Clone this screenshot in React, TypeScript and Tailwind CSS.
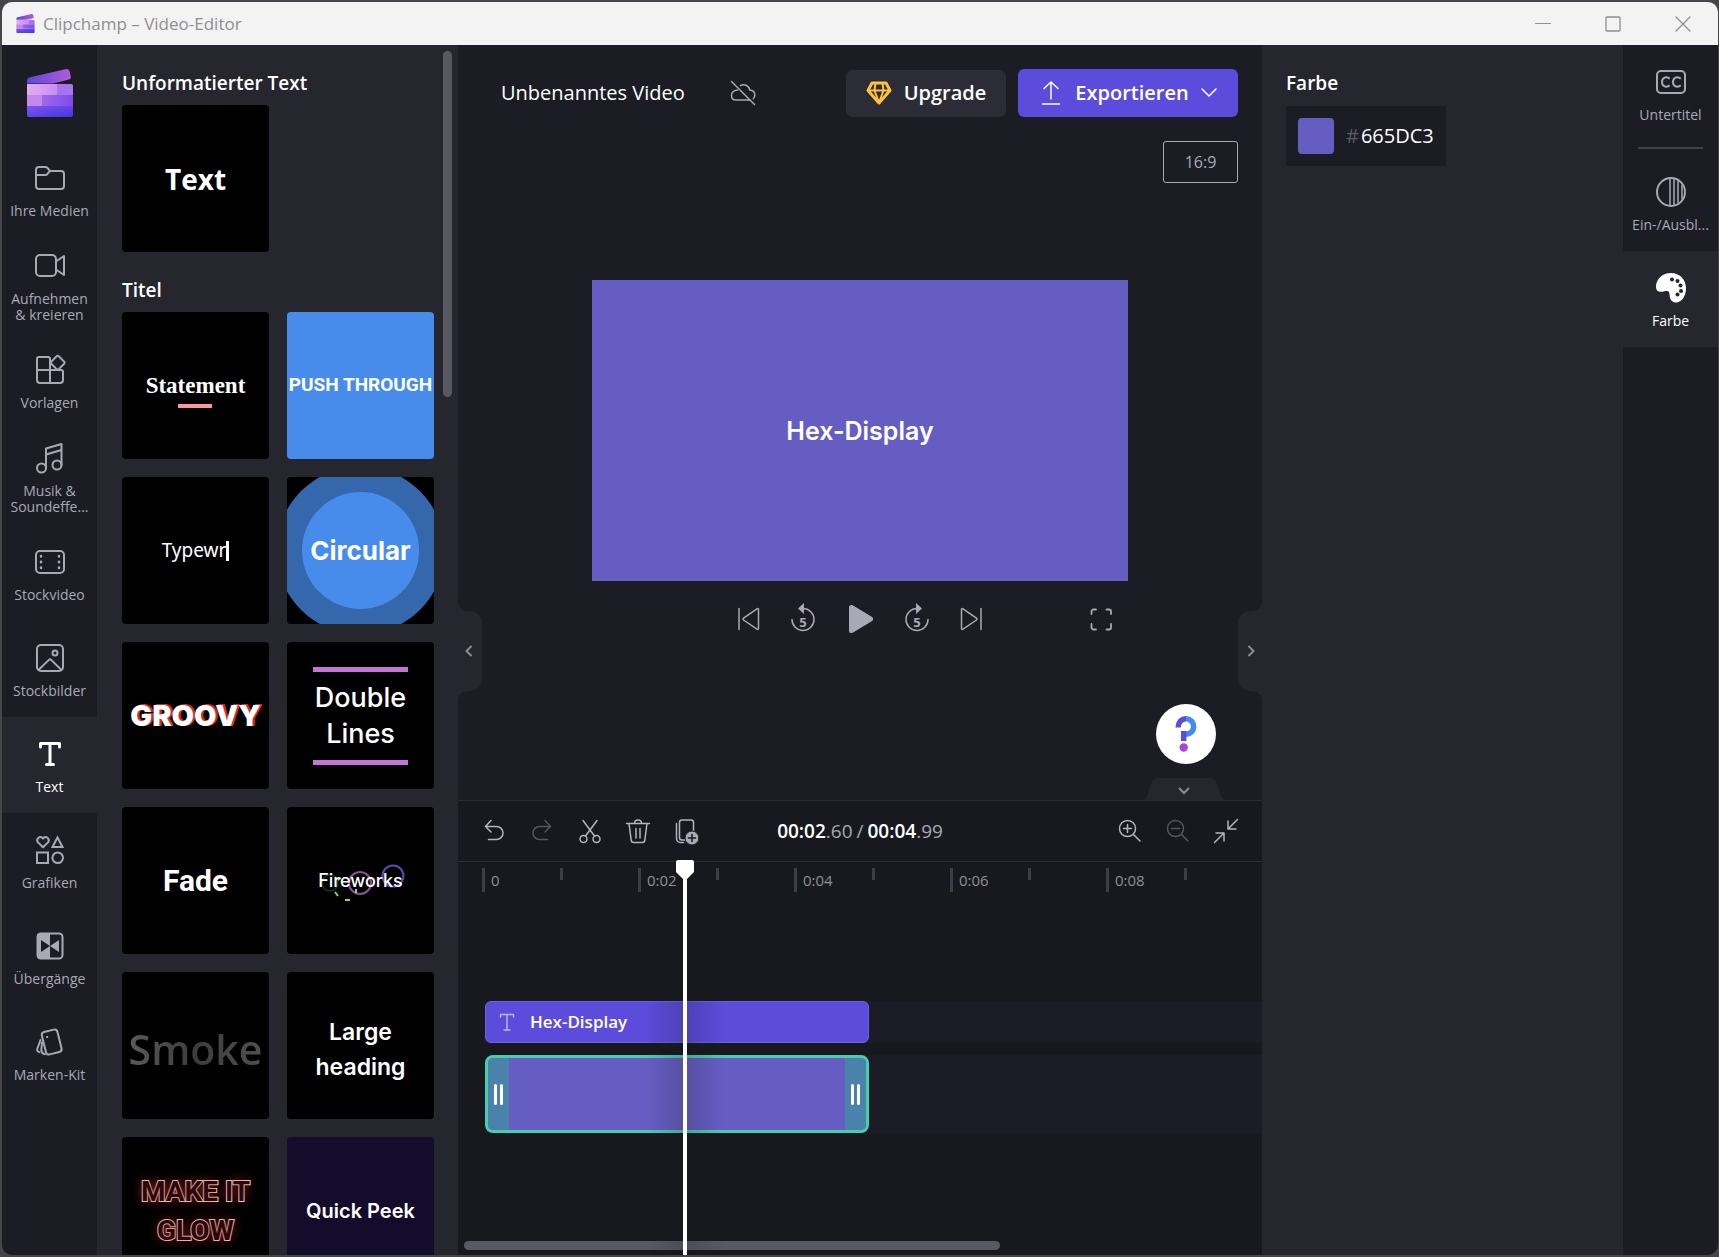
import type { ReactNode } from "react";

/* ---------- shared svg wrapper ---------- */

function Icon({ size = 32, width = 2, children }: { size?: number; width?: number; children: ReactNode }) {
  return (
    <svg
      width={size}
      height={size}
      viewBox={`0 0 ${size} ${size}`}
      fill="none"
      stroke="currentColor"
      strokeWidth={width}
      strokeLinecap="round"
      strokeLinejoin="round"
      className="shrink-0"
      aria-hidden="true"
    >
      {children}
    </svg>
  );
}

function Logo({ size, id }: { size: number; id: string }) {
  return (
    <svg width={size} height={size} viewBox="0 0 48 48" aria-hidden="true">
      <defs>
        <linearGradient id={`${id}a`} x1="0" x2="1">
          <stop offset="0" stopColor="#5a48d8" />
          <stop offset="1" stopColor="#b35bd8" />
        </linearGradient>
        <linearGradient id={`${id}b`} x1="0" x2="1">
          <stop offset="0" stopColor="#e4aaf6" />
          <stop offset="1" stopColor="#c890ee" />
        </linearGradient>
        <linearGradient id={`${id}c`} x1="0" x2="1" y2="1">
          <stop offset="0" stopColor="#7a58ea" />
          <stop offset="1" stopColor="#4a32e4" />
        </linearGradient>
        <linearGradient id={`${id}d`} x1="0" x2="1">
          <stop offset="0" stopColor="#a068ea" />
          <stop offset="1" stopColor="#7c4cea" />
        </linearGradient>
      </defs>
      <path d="M1 12c0-2 1-3.300 3-3.800L39.500.2c2-.4 3.500.4 4 2.300l1.300 5c.4 1.700-.3 2.700-2 3.100L27 14.500H1z" fill={`url(#${id}a)`} />
      <path d="M1 15h30v11H1z" fill={`url(#${id}b)`} />
      <path d="M31 15h14a2 2 0 0 1 2 2v9H31z" fill="#a873ec" />
      <path d="M1 26h15v11H1z" fill="#c586ee" />
      <path d="M16 26h31v11H16z" fill={`url(#${id}d)`} />
      <path d="M1 37h46v9a2 2 0 0 1-2 2H3a2 2 0 0 1-2-2z" fill={`url(#${id}c)`} />
    </svg>
  );
}

/* ---------- side navigation ---------- */

const icons: Record<string, ReactNode> = {
  media: (
    <Icon>
      <path d="M2 8a3 3 0 0 1 3-3h6.500c.8 0 1.400.3 1.900.8L16 9h11a3 3 0 0 1 3 3v12a3 3 0 0 1-3 3H5a3 3 0 0 1-3-3z" />
      <path d="M2 13h9.300c.8 0 1.400-.3 1.900-.8L16 9" />
    </Icon>
  ),
  record: (
    <Icon>
      <rect x="2" y="5" width="20" height="21" rx="4" />
      <path d="M22 11.500 30 6v19l-8-5.500" />
    </Icon>
  ),
  templates: (
    <Icon>
      <path d="M16 16V5a2 2 0 0 0-2-2H5a2 2 0 0 0-2 2v21a3 3 0 0 0 3 3h20a3 3 0 0 0 3-3v-8a2 2 0 0 0-2-2zM3 16h13v13" />
      <path d="M22.600 2.300a1.500 1.500 0 0 1 2.200 0l5.300 5.300a1.500 1.500 0 0 1 0 2.200l-5.300 5.300a1.500 1.500 0 0 1-2.200 0l-5.300-5.300a1.500 1.500 0 0 1 0-2.200z" />
    </Icon>
  ),
  music: (
    <Icon>
      <circle cx="7.500" cy="26" r="4.500" />
      <circle cx="23" cy="23" r="4.500" />
      <path d="M12 26V6.500L27.500 2v21M12 12.500 27.500 8" />
    </Icon>
  ),
  video: (
    <Icon>
      <rect x="2" y="5" width="28" height="22" rx="4" />
      <path d="M7 10v.6M7 15.700v.6M7 21.500v.6M25 10v.6M25 15.700v.6M25 21.500v.6" strokeWidth="2.500" />
    </Icon>
  ),
  image: (
    <Icon>
      <rect x="3" y="3" width="26" height="26" rx="4" />
      <circle cx="21" cy="11" r="2.500" />
      <path d="m5 27.500 9.600-9.400a2 2 0 0 1 2.800 0L27 27.500" />
    </Icon>
  ),
  text: (
    <Icon width={3}>
      <path d="M6.500 9V5.500h19V9M16 5.500v21M12.500 26.500h7" />
    </Icon>
  ),
  graphics: (
    <Icon>
      <path d="M9 13.300 4 8.400a3.200 3.200 0 0 1 4.500-4.500l.5.600.5-.6A3.200 3.200 0 0 1 14 8.400z" />
      <path d="m23.500 3.500 5 9.500h-10zM3 18.500h11v10.500H3z" strokeLinejoin="miter" />
      <circle cx="23.700" cy="23.700" r="5.300" />
    </Icon>
  ),
  transitions: (
    <Icon>
      <rect x="3.500" y="3.500" width="25" height="25" rx="3.500" />
      <path d="M16 3H6a3 3 0 0 0-3 3v20a3 3 0 0 0 3 3h10V16l-9 6V10l9 6zM25 10v12l-9-6z" fill="currentColor" fillRule="evenodd" stroke="none" />
    </Icon>
  ),
  brand: (
    <Icon>
      <rect x="9.700" y="4.500" width="16" height="23" rx="3" transform="rotate(-14 17.700 16)" />
      <circle cx="13.200" cy="11" r="1" fill="currentColor" stroke="none" />
      <path d="M13.200 10.900v.2" />
      <path d="M6.500 14 3.400 22.500c-.7 1.800.1 3 1.800 3.600M8 16.500l-.7 7.500c0 2 1.200 3.700 3.500 4.200" />
    </Icon>
  ),
  captions: (
    <Icon>
      <rect x="2" y="5" width="28" height="22" rx="4" />
      <path d="M14 12.200c-3.500-2-7-.3-7 3.800s3.500 5.800 7 3.800M25 12.200c-3.500-2-7-.3-7 3.800s3.500 5.800 7 3.800" />
    </Icon>
  ),
  fade: (
    <Icon>
      <circle cx="16" cy="16" r="14" />
      <path d="M15 3v26M19 3.500v25M23 5.500v21M27 9v14" strokeWidth="1.500" />
    </Icon>
  ),
  palette: (
    <svg width="32" height="32" viewBox="0 0 32 32" aria-hidden="true">
      <path
        d="M16 1c8.500 0 15 6.500 15 15 0 8-4 14.500-10 14.500-3.500 0-6-2.500-6.300-6.500-.2-3.300-.7-5-2.700-5-2.500 0-4 .8-6.500.8C2.500 19.800 1 18 1 15 1 7 7.500 1 16 1z"
        fill="currentColor"
      />
      <g fill="#26262f">
        <circle cx="17" cy="7.500" r="2" />
        <circle cx="22.500" cy="9" r="2" />
        <circle cx="25.500" cy="13.500" r="2" />
        <circle cx="26" cy="19" r="2" />
        <circle cx="22.500" cy="22.500" r="2" />
      </g>
    </svg>
  ),
};

function NavItem({ icon, lines, active = false }: { icon: string; lines: string[]; active?: boolean }) {
  return (
    <button
      type="button"
      aria-current={active ? "page" : undefined}
      className={`flex h-24 w-full shrink-0 flex-col items-center justify-center gap-[9px] whitespace-nowrap pt-[3px] text-sm leading-4 ${
        active ? "bg-[#26262f] font-medium text-white" : "text-[#a9a9b5]"
      }`}
    >
      {icons[icon]}
      <span className="flex flex-col">
        {lines.map((line) => (
          <span key={line}>{line}</span>
        ))}
      </span>
    </button>
  );
}

/* ---------- template tiles ---------- */

function Tile({ label, className = "bg-black", children }: { label: string; className?: string; children: ReactNode }) {
  return (
    <button
      type="button"
      aria-label={label}
      className={`relative flex size-[147px] shrink-0 items-center justify-center overflow-hidden rounded-sm text-white ${className}`}
    >
      {children}
    </button>
  );
}

function TemplatePanel() {
  return (
    <section className="flex w-[361px] shrink-0 justify-between overflow-hidden bg-[#26262f] pl-[25px] pr-1.5 pt-1.5">
      <div className="flex flex-col pt-[18px]">
        <h2 className="h-9 shrink-0 text-[19px] font-semibold leading-7 text-white">Unformatierter Text</h2>
        <Tile label="Text">
          <span className="text-[28px] font-bold">Text</span>
        </Tile>
        <h2 className="mt-6 h-9 shrink-0 text-[19px] font-semibold leading-7 text-white">Titel</h2>
        <div className="grid grid-cols-2 gap-[18px]">
          <Tile label="Statement">
            <span className="flex flex-col items-center gap-1 pt-2 font-['Liberation_Serif',serif] text-[23px] font-bold">
              <span className="leading-7">Statement</span>
              <span className="h-1 w-[34px] bg-[#f99a98]" />
            </span>
          </Tile>
          <Tile label="Push Through" className="bg-[#488ceb]">
            <span className="whitespace-nowrap font-['Roboto',sans-serif] text-[19px] font-bold">PUSH THROUGH</span>
          </Tile>
          <Tile label="Typewriter">
            <span className="flex items-center">
              <span className="font-['Noto_Sans',sans-serif] text-[19px]">Typewr</span>
              <span className="h-5 w-[3px] bg-white" />
            </span>
          </Tile>
          <Tile label="Circular">
            <svg viewBox="0 0 147 147" className="absolute inset-0" aria-hidden="true">
              <circle cx="73.500" cy="73.500" r="84" fill="#3567ad" />
              <circle cx="73.500" cy="73.500" r="58.500" fill="#488ceb" />
            </svg>
            <span className="relative font-['Inter',sans-serif] text-[26px] font-bold">Circular</span>
          </Tile>
          <Tile label="Groovy">
            <span className="font-['Inter',sans-serif] text-[29px] font-black [text-shadow:2px_0_0_#d42a2a,2px_-1px_0_#d42a2a]">GROOVY</span>
          </Tile>
          <Tile label="Double Lines">
            <span className="flex w-[95px] flex-col items-center gap-2">
              <span className="h-[5px] w-full bg-[#c573d6]" />
              <span className="text-center font-['Inter',sans-serif] text-[27px] font-medium leading-9">
                Double
                <br />
                Lines
              </span>
              <span className="h-[5px] w-full bg-[#c573d6]" />
            </span>
          </Tile>
          <Tile label="Fade">
            <span className="font-['Roboto',sans-serif] text-[30px] font-bold">Fade</span>
          </Tile>
          <Tile label="Fireworks">
            <svg viewBox="0 0 147 147" className="absolute inset-0" fill="none" aria-hidden="true">
              <circle cx="73" cy="76" r="11" stroke="#8d5095" strokeWidth="2" />
              <circle cx="106" cy="69" r="10.500" stroke="#5a4bb4" strokeWidth="2" />
              <circle cx="43" cy="76" r="8" stroke="#123524" strokeWidth="1.500" />
              <path d="m48 85 3 4M58 93h5M69 82v4M51 73l3-2" stroke="#6fe08a" strokeWidth="2" />
            </svg>
            <span className="relative font-['Inter',sans-serif] text-lg font-medium">Fireworks</span>
          </Tile>
          <Tile label="Smoke">
            <span className="bg-linear-to-r from-[#5a5a5a] via-[#3c3c3c] to-[#505050] bg-clip-text pt-2 font-['Open_Sans',sans-serif] text-[41px] font-semibold text-transparent">
              Smoke
            </span>
          </Tile>
          <Tile label="Large heading">
            <span className="pt-2 text-center font-['Inter',sans-serif] text-[23px] font-semibold leading-[35px]">
              Large
              <br />
              heading
            </span>
          </Tile>
          <Tile label="Make it glow">
            <span className="text-center font-['Roboto',sans-serif] text-[28px] font-bold leading-[39px] text-[#2a080a] [-webkit-text-stroke:2px_#f6e4dc] [paint-order:stroke_fill] [text-shadow:0_0_12px_#a02222]">
              MAKE IT
              <br />
              GLOW
            </span>
          </Tile>
          <Tile label="Quick Peek" className="bg-[#130d2b]">
            <span className="font-['Inter',sans-serif] text-xl font-semibold">Quick Peek</span>
          </Tile>
        </div>
      </div>
      <div className="h-[346px] w-[9px] rounded-full bg-[#595964]" />
    </section>
  );
}

/* ---------- stage ---------- */

function StageHeader() {
  return (
    <div className="flex flex-col items-end gap-6 pl-[43px] pr-6 pt-6">
      <div className="flex w-full items-center">
        <h1 className="text-xl leading-7 text-white">Unbenanntes Video</h1>
        <button type="button" aria-label="Nicht in der Cloud gesichert" className="ml-11 text-[#a9a9b5]">
          <Icon size={28} width={1.5}>
            <path d="M8.500 11C4.500 11.500 2.500 14 2.500 16.500c0 3 2 4.500 4.500 4.500h14.500M11.500 6.500c4.500-2 8.500.5 9.300 4.500 3.200.2 5 2.500 5 5.300 0 1.200-.5 2.500-1.500 3.400M2.500 2.500l23 23" />
          </Icon>
        </button>
        <div className="ml-auto flex items-center gap-3">
          <button type="button" className="flex h-[47px] w-40 items-center justify-center gap-3 rounded-md bg-[#2c2c37] text-xl font-semibold text-white">
            <svg width="26" height="24" viewBox="0 0 26 24" fill="none" stroke="#ffc23d" strokeWidth="3" strokeLinejoin="round" aria-hidden="true">
              <path d="M6 2h14l4 7.500L13 22 2 9.500z" />
              <path d="M1.500 9.500h23M9.500 2 8.500 9.500l4.500 12 4.500-12L16.500 2" strokeWidth="2" />
            </svg>
            Upgrade
          </button>
          <button type="button" className="flex h-12 w-[220px] items-center justify-center gap-3 rounded-md bg-[#5b4cdb] text-xl font-semibold text-white">
            <Icon size={24} width={1.5}>
              <path d="M12 18V1M5 7.500 12 1l7 6.500M3.500 23h17" />
            </Icon>
            Exportieren
            <Icon size={16} width={1.500}>
              <path d="m1 4 7 7 7-7" />
            </Icon>
          </button>
        </div>
      </div>
      <button type="button" className="h-[42px] w-[75px] rounded-[3px] border border-[#a9a9b5] text-base text-[#a9a9b5]">
        16:9
      </button>
    </div>
  );
}

function PlayerControls() {
  return (
    <div className="mx-auto flex w-2/3 items-center pl-[142px] pr-3 text-[#a9a9b5]">
      <div className="flex items-center gap-6">
        <button type="button" aria-label="Zum Anfang">
          <Icon size={30} width={1.5}>
            <path d="M5 4.500v21M24.500 5.500v19c0 .8-.8 1.200-1.500.7L9.500 16c-.7-.5-.7-1.300 0-1.800L23 4.800c.7-.5 1.500-.1 1.500.7z" />
          </Icon>
        </button>
        <button type="button" aria-label="5 Sekunden zurück">
          <SeekIcon back />
        </button>
        <button type="button" aria-label="Wiedergabe" className="pl-1">
          <svg width="32" height="32" viewBox="0 0 32 32" fill="currentColor" aria-hidden="true">
            <path d="M3 4.500C3 2.300 4.800 1.300 6.700 2.300l19 11.500c2 1.200 2 3.200 0 4.400l-19 11.500c-1.900 1-3.700 0-3.700-2.200z" />
          </svg>
        </button>
        <button type="button" aria-label="5 Sekunden vor">
          <SeekIcon />
        </button>
        <button type="button" aria-label="Zum Ende">
          <Icon size={30} width={1.5}>
            <path d="M25 4.500v21M5.500 5.500v19c0 .8.8 1.200 1.500.7L20.500 16c.7-.5.7-1.300 0-1.800L7 4.800c-.7-.5-1.500-.1-1.500.7z" />
          </Icon>
        </button>
      </div>
      <button type="button" aria-label="Vollbild" className="ml-auto">
        <Icon size={30} width={1.800}>
          <path d="M5.500 10V7.500a2 2 0 0 1 2-2H10M20.500 5.500H23a2 2 0 0 1 2 2V10M25 20v3.500a2 2 0 0 1-2 2h-2.500M10 25.500H7.500a2 2 0 0 1-2-2V20" />
        </Icon>
      </button>
    </div>
  );
}

function SeekIcon({ back = false }: { back?: boolean }) {
  return (
    <span className="relative flex size-[30px] items-end justify-center">
      <svg width="30" height="34" viewBox="0 0 30 34" fill="none" stroke="currentColor" strokeWidth="1.500" className={`absolute -top-0.5 left-0 ${back ? "" : "-scale-x-100"}`} aria-hidden="true">
        <path d="M4 17.500a11 11 0 1 0 11-11" strokeLinecap="round" />
        <path d="m10 6.500 6-5.500v11z" fill="currentColor" stroke="none" />
      </svg>
      <span className="text-[13px] font-bold leading-6">5</span>
    </span>
  );
}

function SideHandle({ side }: { side: "left" | "right" }) {
  const left = side === "left";
  return (
    <button
      type="button"
      aria-label={left ? "Linkes Panel einklappen" : "Rechtes Panel einklappen"}
      className={`absolute top-[555px] h-[102px] w-6 text-[#8b8b98] ${left ? "left-0" : "right-0"}`}
    >
      <svg width="24" height="102" viewBox="0 0 24 102" fill="none" aria-hidden="true">
        <g transform={left ? undefined : "matrix(-1 0 0 1 24 0)"}>
          <path d="M0 0c0 8 5 11 11 11 8 0 13 5 13 12v56c0 7-5 12-13 12-6 0-11 3-11 11z" fill="#26262f" />
          <path d="m13.500 46-5 5 5 5" stroke="currentColor" strokeWidth="2" />
        </g>
      </svg>
    </button>
  );
}

function Stage() {
  return (
    <section className="relative flex min-h-0 flex-1 flex-col bg-[#1c1c25]">
      <StageHeader />
      <div className="mx-auto mt-[97px] flex aspect-video w-2/3 items-center justify-center bg-[#665dc3]">
        <span className="font-['Inter',sans-serif] text-[25px] font-semibold leading-8 text-white">Hex-Display</span>
      </div>
      <div className="mt-[22px]">
        <PlayerControls />
      </div>
      <SideHandle side="left" />
      <SideHandle side="right" />
      <button type="button" aria-label="Hilfe" className="absolute bottom-9 right-[46px] size-[60px] rounded-full bg-white">
        <svg width="60" height="60" viewBox="0 0 60 60" fill="none" strokeWidth="5.500" aria-hidden="true">
          <path d="M22.300 23.500v-1a7.700 7.700 0 0 1 7.700-7.700" stroke="#5b4cdb" />
          <path d="M30 14.800a7.700 7.700 0 0 1 0 15.400" stroke="#458ceb" />
          <path d="M27.700 27v10" stroke="#5b4cdb" />
          <circle cx="27.700" cy="43.500" r="4.200" fill="#ae43dc" />
        </svg>
      </button>
      <button type="button" aria-label="Zeitachse einklappen" className="absolute bottom-0 right-[34px] text-[#8b8b98]">
        <svg width="88" height="22" viewBox="0 0 88 22" fill="none" aria-hidden="true">
          <path d="M0 22c6 0 8-4 9-10C10 4 14 0 20 0h48c6 0 10 4 11 12 1 6 3 10 9 10z" fill="#26262f" />
          <path d="m39 10 5 5 5-5" stroke="currentColor" strokeWidth="2" />
        </svg>
      </button>
    </section>
  );
}

/* ---------- timeline ---------- */

function Tool({ label, disabled = false, children }: { label: string; disabled?: boolean; children: ReactNode }) {
  return (
    <button type="button" aria-label={label} disabled={disabled} className={`size-7 ${disabled ? "text-[#55555c]" : "text-[#b4b4be]"}`}>
      <Icon size={28} width={1.500}>
        {children}
      </Icon>
    </button>
  );
}

function Toolbar() {
  return (
    <div className="flex h-[61px] items-center justify-between border-b border-[#2b2b34] px-[22px]">
      <div className="flex flex-1 gap-5">
        <Tool label="Rückgängig">
          <path d="M11 3.500 5.500 9.500 11 15M5.500 9.500h11a6.500 6.500 0 0 1 0 13H8.500" />
        </Tool>
        <Tool label="Wiederholen" disabled>
          <path d="M17 3.500l5.500 6L17 15M22.500 9.500h-11a6.500 6.500 0 0 0 0 13h8" />
        </Tool>
        <Tool label="Teilen">
          <circle cx="7.500" cy="22" r="3.500" />
          <circle cx="20.500" cy="22" r="3.500" />
          <path d="M7 3.500 18.500 19M21 3.500 9.500 19" />
        </Tool>
        <Tool label="Löschen">
          <path d="M2.500 6.500h23M5 6.500l2.200 17a2.500 2.500 0 0 0 2.500 2h8.600a2.500 2.500 0 0 0 2.500-2l2.200-17M10.500 6.500c0-2.300 1.500-3.500 3.500-3.500s3.500 1.200 3.500 3.500M12 11.500v9.500M16 11.500v9.500" />
        </Tool>
        <Tool label="Duplizieren">
          <rect x="7.500" y="3" width="14" height="20" rx="2.500" />
          <path d="M4.500 6.500v15a4 4 0 0 0 4 4h3" />
          <circle cx="20" cy="21" r="7" fill="#a9a9b5" stroke="#18191e" strokeWidth="1" />
          <path d="M20 17.500v7M16.500 21h7" stroke="#18191e" />
        </Tool>
      </div>
      <div className="flex items-center gap-1 text-[19px] leading-6 text-[#a9a9b5]">
        <span>
          <span className="font-semibold text-white">00:02</span>.60
        </span>
        <span>/</span>
        <span>
          <span className="font-semibold text-white">00:04</span>.99
        </span>
      </div>
      <div className="flex flex-1 justify-end gap-5">
        <Tool label="Vergrößern">
          <circle cx="11.500" cy="11.500" r="8" />
          <path d="m17.500 17.500 6.500 6.500M7.500 11.500h8M11.500 7.500v8" />
        </Tool>
        <Tool label="Verkleinern" disabled>
          <circle cx="11.500" cy="11.500" r="8" />
          <path d="m17.500 17.500 6.500 6.500M7.500 11.500h8" />
        </Tool>
        <Tool label="An Ansicht anpassen">
          <path d="M25.500 2.500 16 12M16 4v8h8M2.500 25.500 12 16M4 16h8v8" />
        </Tool>
      </div>
    </div>
  );
}

function TrimHandle() {
  return (
    <span className="flex w-[21px] items-center justify-center gap-[3px] bg-[#4a82ab]">
      <span className="h-[21px] w-[3px] rounded-full bg-white" />
      <span className="h-[21px] w-[3px] rounded-full bg-white" />
    </span>
  );
}

const marks = ["0", "0:02", "0:04", "0:06", "0:08"];

function Timeline() {
  return (
    <section className="flex h-[455px] shrink-0 flex-col border-t border-[#2b2b34] bg-[#18191e]">
      <Toolbar />
      <div className="relative flex min-h-0 flex-1 flex-col overflow-x-clip">
        <div className="flex h-[139px] shrink-0 pl-6 pt-1.5">
          {marks.map((mark) => (
            <div key={mark} className="flex h-6 w-[156px] shrink-0">
              <div className="w-[78px] border-l-[3px] border-[#3d3d47] pl-1.5 text-[15px] font-medium leading-6 text-[#8f8f9a]">{mark}</div>
              <div className="h-3 border-l-[3px] border-[#3d3d47]" />
            </div>
          ))}
        </div>
        <div className="ml-[27px] flex flex-col gap-3">
          <div className="flex h-[42px] bg-[#1c1c26]">
            <button type="button" className="flex w-96 items-center gap-3.5 rounded-md border border-[#6e61e2] bg-[#5b4cdb] pl-3 text-[17px] font-semibold text-white">
              <span className="text-[#b9b2f3]">
                <Icon size={18} width={1.500}>
                  <path d="M2.500 4V1.500h13V4M9 1.500v15.500M6 17h6" />
                </Icon>
              </span>
              Hex-Display
            </button>
          </div>
          <div className="flex h-[78px] bg-[#1c1c26]">
            <button type="button" aria-label="Farbclip" className="flex w-96 justify-between overflow-hidden rounded-lg border-[3px] border-[#45cfae] bg-[#665dc3]">
              <span className="flex h-full w-full justify-between">
                <TrimHandle />
                <TrimHandle />
              </span>
            </button>
          </div>
        </div>
        <div className="mb-[5px] ml-1.5 mt-auto h-[9px] w-2/3 rounded-full bg-[#595964]" />
        <div className="absolute -top-0.5 bottom-0 left-[188px] flex w-[78px] flex-col items-center">
          <div className="absolute inset-x-0 bottom-0 top-[141px] bg-linear-to-r from-transparent via-[#18191e]/20 to-transparent" />
          <svg width="18" height="22" viewBox="0 0 18 22" className="relative shrink-0" aria-hidden="true">
            <path d="M2 0h14a2 2 0 0 1 2 2v10l-7 7v3H7v-3l-7-7V2a2 2 0 0 1 2-2z" fill="#fff" />
          </svg>
          <div className="relative w-1 flex-1 bg-white" />
        </div>
      </div>
    </section>
  );
}

/* ---------- application ---------- */

export default function App() {
  return (
    <div className="h-screen overflow-hidden border-y-2 border-l-2 border-r border-[#44464a] bg-[#44464a] font-['Open_Sans','Noto_Sans',sans-serif]">
      <div className="flex h-full flex-col overflow-hidden rounded-[10px]">
        <header className="flex h-[43px] shrink-0 items-center bg-[#f3f3f3] pl-3.5 text-[#8f8f8f]">
          <Logo size={19} id="bar" />
          <span className="ml-2 text-[17px] leading-6">Clipchamp – Video-Editor</span>
          <div className="ml-auto flex">
            <button type="button" aria-label="Minimieren" className="flex h-10 w-[70px] items-center justify-center">
              <Icon size={16} width={1}>
                <path d="M.5 7.500h15" />
              </Icon>
            </button>
            <button type="button" aria-label="Maximieren" className="flex h-10 w-[70px] items-center justify-center">
              <Icon size={16} width={1.300}>
                <rect x="1" y="1" width="14" height="14" rx="1" />
              </Icon>
            </button>
            <button type="button" aria-label="Schließen" className="flex h-10 w-[70px] items-center justify-center">
              <Icon size={16} width={1.300}>
                <path d="m1 1 14 14M15 1 1 15" />
              </Icon>
            </button>
          </div>
        </header>
        <main className="flex min-h-0 flex-1">
          <nav aria-label="Inhalte" className="flex w-[95px] shrink-0 flex-col bg-[#1c1c25]">
            <div className="flex h-24 shrink-0 items-center justify-center">
              <Logo size={48} id="nav" />
            </div>
            <NavItem icon="media" lines={["Ihre Medien"]} />
            <NavItem icon="record" lines={["Aufnehmen", "& kreieren"]} />
            <NavItem icon="templates" lines={["Vorlagen"]} />
            <NavItem icon="music" lines={["Musik &", "Soundeffe..."]} />
            <NavItem icon="video" lines={["Stockvideo"]} />
            <NavItem icon="image" lines={["Stockbilder"]} />
            <NavItem icon="text" lines={["Text"]} active />
            <NavItem icon="graphics" lines={["Grafiken"]} />
            <NavItem icon="transitions" lines={["Übergänge"]} />
            <NavItem icon="brand" lines={["Marken-Kit"]} />
          </nav>
          <TemplatePanel />
          <div className="flex min-w-0 flex-1 flex-col">
            <Stage />
            <Timeline />
          </div>
          <aside className="w-[361px] shrink-0 bg-[#26262f] pl-6 pt-6 text-white">
            <h2 className="h-[37px] text-[19px] font-semibold leading-7">Farbe</h2>
            <label className="flex h-[60px] w-40 items-center rounded-[3px] bg-[#1c1c25] pl-3 text-xl">
              <span className="size-9 shrink-0 rounded-sm bg-[#665dc3]" />
              <span className="ml-3 text-[#5a5a64]">#</span>
              <input type="text" aria-label="Hex-Farbwert" defaultValue="665DC3" className="ml-0.5 w-20 min-w-0 bg-transparent outline-none" />
            </label>
          </aside>
          <nav aria-label="Eigenschaften" className="flex w-[95px] shrink-0 flex-col bg-[#1c1c25]">
            <NavItem icon="captions" lines={["Untertitel"]} />
            <div className="mx-[15px] my-1.5 h-0.5 shrink-0 bg-[#41414d]" />
            <NavItem icon="fade" lines={["Ein-/Ausbl..."]} />
            <NavItem icon="palette" lines={["Farbe"]} active />
          </nav>
        </main>
      </div>
    </div>
  );
}
